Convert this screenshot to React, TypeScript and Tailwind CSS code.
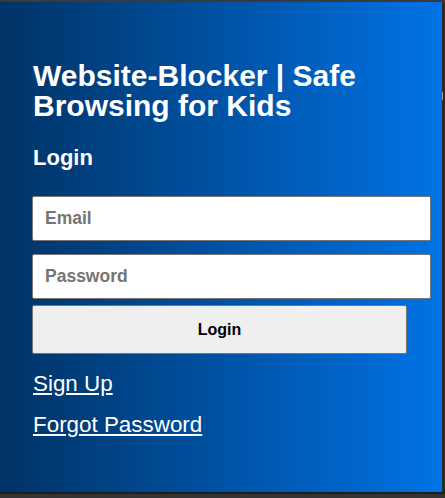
import React from "react";

export default function App() {
  const font = { fontFamily: '"Liberation Sans", Arial, sans-serif' };
  return (
    <div className="w-[445px] h-[498px] bg-[#2e2e2e] flex flex-col" style={font}>
      <div className="h-[2px] bg-[#3a3a3a]" />
      <div className="flex">
        <div className="w-[442px] h-[490px] bg-gradient-to-r from-[#003366] to-[#0073e6] flex flex-col pl-[32px] pt-[59px]">
          <h1 className="text-white font-bold text-[30px] leading-[30px] w-[340px] ml-px">
            Website-Blocker | Safe Browsing for Kids
          </h1>
          <h2 className="text-white font-bold text-[22px] leading-[26px] mt-[24px] ml-px">Login</h2>
          <input
            className="mt-[25px] w-[399px] h-[45px] bg-white border border-[#767676] rounded-[2px] px-[12px] text-[17.5px] font-bold placeholder:text-[#757575] outline-none"
            placeholder="Email"
          />
          <input
            type="password"
            className="mt-[13px] w-[399px] h-[45px] bg-white border border-[#767676] rounded-[2px] px-[12px] text-[17.5px] font-bold placeholder:text-[#757575] outline-none"
            placeholder="Password"
          />
          <button className="mt-[6px] w-[375px] h-[49px] bg-[#efefef] border border-[#767676] rounded-[2px] text-black font-bold text-[16px]">
            Login
          </button>
          <a href="#" className="mt-[17px] text-white underline text-[22.4px] leading-[26px] self-start ml-px">
            Sign Up
          </a>
          <a href="#" className="mt-[15px] text-white underline text-[22.4px] leading-[26px] self-start ml-px">
            Forgot Password
          </a>
        </div>
        <div className="w-[3px] bg-[#2a2a2a] flex flex-col">
          <div className="h-[90px]" />
          <div className="h-[8px] w-px bg-[#9a9a9a]" />
        </div>
      </div>
      <div className="h-[2px] bg-[#1e1e1e]" />
      <div className="flex-1 bg-[#333333]" />
    </div>
  );
}
